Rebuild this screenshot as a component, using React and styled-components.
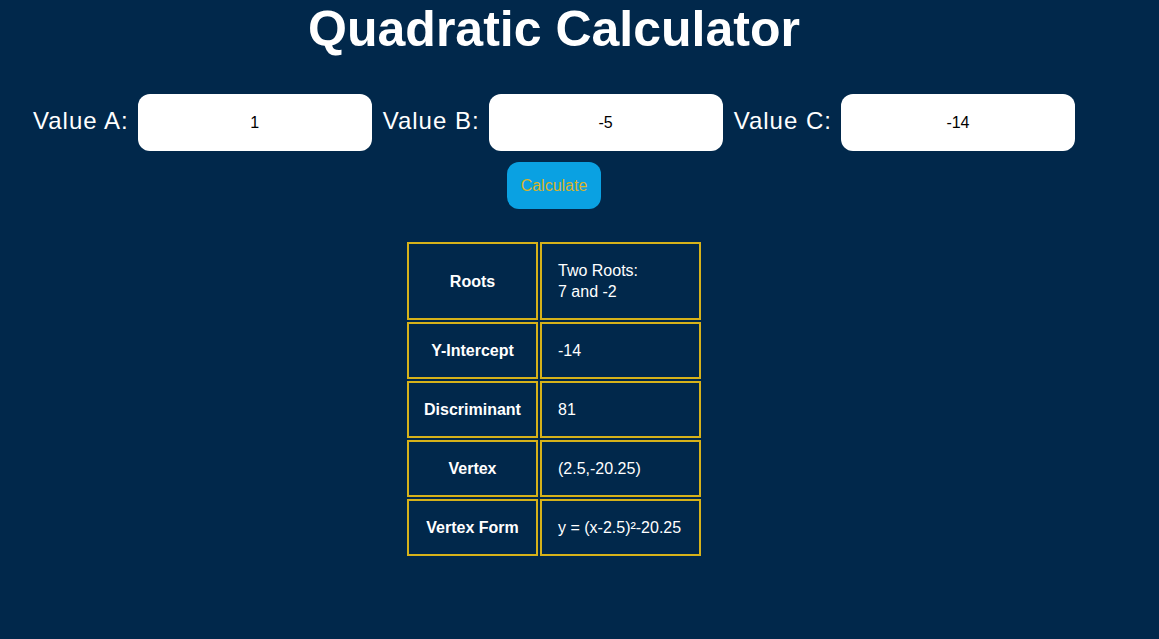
import React, { useState } from "react";
import styled, { createGlobalStyle } from "styled-components";

const GlobalStyle = createGlobalStyle`
  html, body {
    margin: 0;
    padding: 0;
    background-color: #01284b;
  }
  body {
    min-height: 100vh;
    font-family: "Liberation Sans", Arial, sans-serif;
    color: #ffffff;
  }
`;

// Layout
const Page = styled.div`
  width: 1108px;
  display: flex;
  flex-direction: column;
  align-items: center;
`;

const Title = styled.h1`
  margin: 0;
  font-size: 50px;
  font-weight: bold;
  color: #ffffff;
`;

const InputRow = styled.div`
  display: flex;
  align-items: center;
  margin-top: 36px;
`;

const Field = styled.label`
  display: flex;
  align-items: center;
  gap: 9px;
  margin-right: 11px;

  &:last-child {
    margin-right: 0;
  }
`;

const FieldLabel = styled.span`
  font-size: 24px;
  letter-spacing: 1px;
  color: #ffffff;
  padding-bottom: 4px;
`;

const NumberInput = styled.input`
  box-sizing: border-box;
  width: 234px;
  height: 57px;
  border: none;
  border-radius: 12px;
  background: #ffffff;
  font-family: "Liberation Sans", Arial, sans-serif;
  font-size: 16px;
  color: #000000;
  text-align: center;
  outline: none;
`;

const CalcButton = styled.button`
  box-sizing: border-box;
  height: 47px;
  margin-top: 11px;
  padding: 0 14px;
  border: none;
  border-radius: 12px;
  background-color: #0aa1e2;
  color: #d9b42a;
  font-family: "Liberation Sans", Arial, sans-serif;
  font-size: 16px;
  cursor: pointer;
`;

const ResultTable = styled.table`
  margin-top: 31px;
  border-collapse: separate;
  border-spacing: 2px;
`;

const HeadCell = styled.th`
  box-sizing: border-box;
  width: 131px;
  border: 2px solid #d6b21a;
  padding: 16px 8px;
  font-size: 16px;
  line-height: 21px;
  font-weight: bold;
  text-align: center;
  color: #ffffff;
`;

const ValueCell = styled.td`
  box-sizing: border-box;
  width: 161px;
  border: 2px solid #d6b21a;
  padding: 16px 16px;
  font-size: 16px;
  line-height: 21px;
  text-align: left;
  color: #ffffff;
`;

function solve(a, b, c) {
  const disc = b * b - 4 * a * c;
  const h = -b / (2 * a);
  const k = c - (b * b) / (4 * a);
  let roots;
  if (disc > 0) {
    const r1 = (-b + Math.sqrt(disc)) / (2 * a);
    const r2 = (-b - Math.sqrt(disc)) / (2 * a);
    roots = ["Two Roots:", `${r1} and ${r2}`];
  } else if (disc === 0) {
    roots = ["One Root:", `${h}`];
  } else {
    roots = ["No Real Roots"];
  }
  const sign = (n) => (n < 0 ? `${n}` : `+${n}`);
  return {
    roots,
    intercept: c,
    disc,
    vertex: `(${h},${k})`,
    form: `y = (x${sign(-h)})²${sign(k)}`,
  };
}

const App = () => {
  const [values, setValues] = useState({ a: "1", b: "-5", c: "-14" });
  const [result, setResult] = useState(() => solve(1, -5, -14));

  const update = (key) => (e) => setValues({ ...values, [key]: e.target.value });

  const calculate = () => {
    setResult(solve(Number(values.a), Number(values.b), Number(values.c)));
  };

  const rows = [
    { label: "Roots", value: result.roots },
    { label: "Y-Intercept", value: [result.intercept] },
    { label: "Discriminant", value: [result.disc] },
    { label: "Vertex", value: [result.vertex] },
    { label: "Vertex Form", value: [result.form] },
  ];

  return (
    <>
      <GlobalStyle />
      <Page>
        <Title>Quadratic Calculator</Title>

        <InputRow>
          {["a", "b", "c"].map((key) => (
            <Field key={key}>
              <FieldLabel>Value {key.toUpperCase()}:</FieldLabel>
              <NumberInput value={values[key]} onChange={update(key)} />
            </Field>
          ))}
        </InputRow>

        <CalcButton onClick={calculate}>Calculate</CalcButton>

        <ResultTable>
          <tbody>
            {rows.map((row) => (
              <tr key={row.label}>
                <HeadCell>{row.label}</HeadCell>
                <ValueCell>
                  {row.value.map((line, i) => (
                    <React.Fragment key={i}>
                      {i > 0 && <br />}
                      {line}
                    </React.Fragment>
                  ))}
                </ValueCell>
              </tr>
            ))}
          </tbody>
        </ResultTable>
      </Page>
    </>
  );
};

export default App;
